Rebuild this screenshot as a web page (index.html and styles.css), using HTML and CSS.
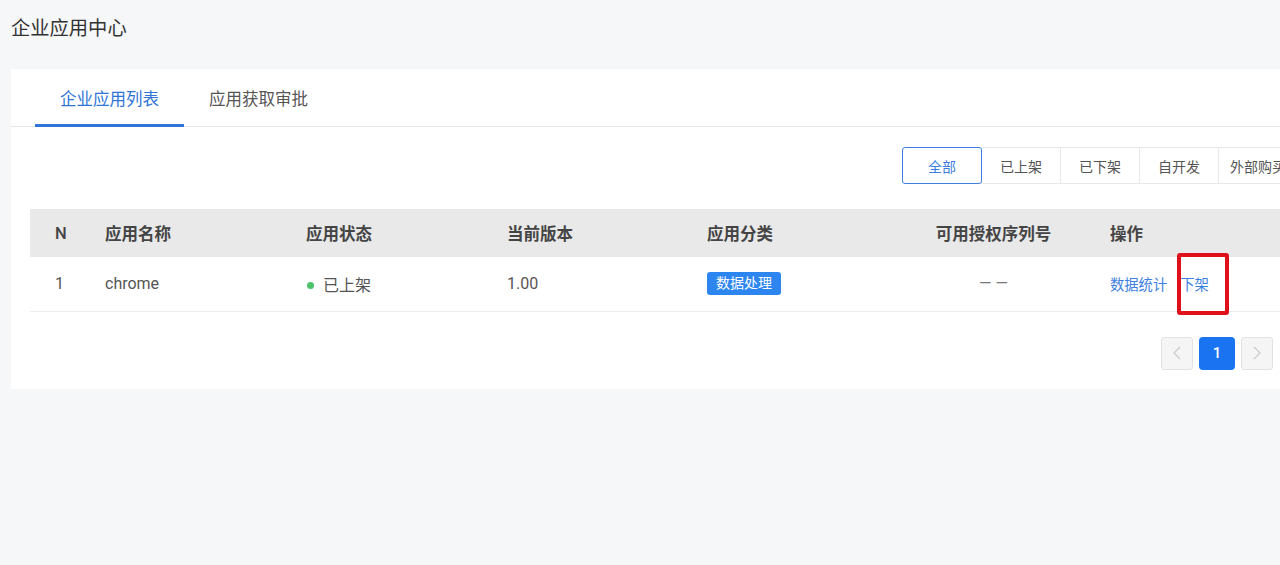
FILE: index.html
```html
<!DOCTYPE html>
<html>
<head>
	<meta charset="utf-8">
	<title>企业应用中心</title>
	<link rel="stylesheet" href="styles.css">
</head>
<body>
	<div class="page">
		<h1 class="page-title">企业应用中心</h1>

		<div class="card">
			<div class="tabs">
				<a class="tab active" href="#list">企业应用列表</a>
				<a class="tab" href="#approve">应用获取审批</a>
			</div>

			<div class="toolbar">
				<div class="filter">
					<span class="filter-btn selected">全部</span>
					<span class="filter-btn">已上架</span>
					<span class="filter-btn">已下架</span>
					<span class="filter-btn">自开发</span>
					<span class="filter-btn">外部购买</span>
				</div>
			</div>

			<table class="grid">
				<thead>
					<tr>
						<th class="col-n">N</th>
						<th class="col-name">应用名称</th>
						<th class="col-state">应用状态</th>
						<th class="col-ver">当前版本</th>
						<th class="col-cat">应用分类</th>
						<th class="col-serial">可用授权序列号</th>
						<th class="col-op">操作</th>
					</tr>
				</thead>
				<tbody>
					<tr>
						<td class="col-n">1</td>
						<td>chrome</td>
						<td><span class="dot"></span>已上架</td>
						<td>1.00</td>
						<td><span class="tag">数据处理</span></td>
						<td class="col-serial serial">— —</td>
						<td class="ops">
							<a href="#stats">数据统计</a>
							<a href="#off">下架</a>
							<span class="mark"></span>
						</td>
					</tr>
				</tbody>
			</table>

			<div class="pager">
				<span class="pg-btn disabled">
					<svg width="8" height="14" viewBox="0 0 8 14"><polyline points="7,1 1,7 7,13" fill="none" stroke="#c9c9c9" stroke-width="1.2"/></svg>
				</span>
				<span class="pg-num">1</span>
				<span class="pg-btn">
					<svg width="8" height="14" viewBox="0 0 8 14"><polyline points="1,1 7,7 1,13" fill="none" stroke="#c9c9c9" stroke-width="1.2"/></svg>
				</span>
			</div>
		</div>
	</div>
</body>
</html>
```

FILE: styles.css
```css
* {
	box-sizing: border-box;
}
body {
	margin: 0;
	background: #f6f7f9;
	font-family: Roboto, "Noto Sans CJK SC", sans-serif;
	color: #555;
	overflow: hidden;
}
.page {
	padding-left: 11px;
	width: 1330px;
}
.page-title {
	margin: 0 0 29px;
	padding-top: 17px;
	font-size: 19.3px;
	line-height: 23px;
	font-weight: normal;
	color: #333;
}

.card {
	width: 1306px;
	background: #fff;
	padding: 0 19px 19px;
}

.tabs {
	display: flex;
	height: 58px;
	margin: 0 -19px;
	padding-left: 24px;
	border-bottom: 1px solid #e6e6e6;
}
.tab {
	display: flex;
	align-items: center;
	padding: 2px 25px 0;
	font-size: 16.5px;
	color: #555;
	text-decoration: none;
	border-bottom: 3px solid transparent;
	margin-bottom: -1px;
}
.tab.active {
	color: #2f74d6;
	border-bottom-color: #2f74d6;
}

.toolbar {
	display: flex;
	justify-content: flex-end;
	padding-top: 20px;
}
.filter {
	display: flex;
}
.filter-btn {
	width: 80px;
	height: 37px;
	display: flex;
	align-items: center;
	justify-content: center;
	font-size: 14px;
	color: #555;
	border: 1px solid #e8e8e8;
	margin-left: -1px;
	white-space: nowrap;
}
.filter-btn:first-child {
	margin-left: 0;
}
.filter-btn.selected {
	color: #3d7fe0;
	border: 1px solid #3d7fe0;
	border-radius: 3px;
	position: relative;
	z-index: 1;
}

.grid {
	width: 100%;
	margin-top: 25px;
	border-collapse: collapse;
	table-layout: fixed;
}
.grid th {
	height: 48px;
	background: #e9e9e9;
	font-size: 16.5px;
	font-weight: bold;
	color: #444;
	text-align: left;
	padding: 0 15px;
}
.grid td {
	height: 54px;
	font-size: 16px;
	color: #555;
	padding: 0 15px;
	border-bottom: 1px solid #ededed;
}
.grid .col-n {
	width: 60px;
	padding-left: 25px;
	font-weight: normal;
}
.grid th.col-n {
	font-weight: 500;
}
.col-name,
.col-state {
	width: 201px;
}
.col-ver,
.col-cat {
	width: 200px;
}
.grid .col-serial {
	width: 203px;
	text-align: center;
}
.grid .serial {
	color: #777;
}
.dot {
	display: inline-block;
	width: 7px;
	height: 7px;
	border-radius: 50%;
	background: #4cc36a;
	margin: 0 9px 2px 1px;
	vertical-align: middle;
}
.tag {
	display: inline-block;
	background: #2d86f0;
	color: #fff;
	font-size: 14px;
	line-height: 23px;
	padding: 0 9px;
	border-radius: 3px;
}
.ops {
	position: relative;
}
.ops a {
	font-size: 14.3px;
	color: #3d7fe0;
	text-decoration: none;
	margin-right: 9px;
}
.mark {
	position: absolute;
	left: 82px;
	top: -4px;
	width: 52px;
	height: 62px;
	border: 4px solid #e0101a;
	border-radius: 3px;
}

.pager {
	display: flex;
	justify-content: flex-end;
	align-items: center;
	gap: 5px;
	padding: 25px 25px 0 0;
}
.pg-btn {
	width: 32px;
	height: 33px;
	display: flex;
	align-items: center;
	justify-content: center;
	border: 1px solid #e2e2e2;
	background: #f5f5f5;
	border-radius: 3px;
}
.pg-num {
	width: 36px;
	height: 33px;
	display: flex;
	align-items: center;
	justify-content: center;
	background: #1a73f0;
	color: #fff;
	font-size: 15px;
	font-weight: 500;
	border-radius: 4px;
	margin: 0 1px;
}
```
